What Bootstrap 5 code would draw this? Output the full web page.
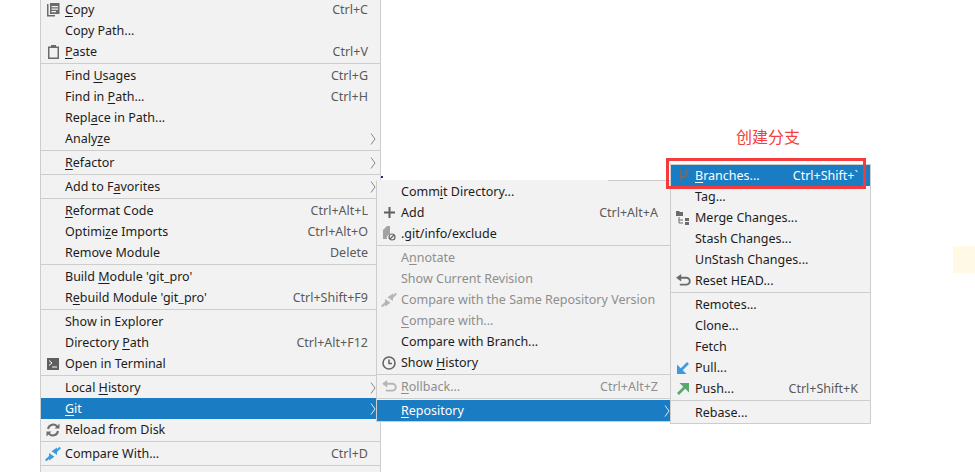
<!DOCTYPE html>
<html lang="en">
<head>
<meta charset="utf-8">
<title>Git menu</title>
<link href="https://cdn.jsdelivr.net/npm/bootstrap@5.3.0/dist/css/bootstrap.min.css" rel="stylesheet">
<style>
html,body{height:100%;margin:0;background:#fff;overflow:hidden}
body{font-family:"Noto Sans","Liberation Sans",sans-serif;font-size:12.5px;position:relative}
.ide-menu.dropdown-menu{display:block;position:absolute;margin:0;padding:0;background:#f2f2f2;border:1px solid #cdcdcd;border-radius:0;min-width:0;font-size:12.5px;color:#1c1c1c}
.menu-main{left:40px;top:-2px;width:341px;z-index:1}
.menu-repo{left:376px;top:180px;width:295px;z-index:2;border-top-color:transparent!important}
.menu-branch{left:670px;top:164px;width:201px;z-index:3}
.menu-repo::before{content:"";position:absolute;left:231px;right:0;top:-1px;height:1px;background:#cdcdcd}
.ide-menu .dropdown-item{display:flex;align-items:center;height:21px;line-height:21px;padding:0;color:#1c1c1c;white-space:nowrap;background:transparent}
.ide-menu .dropdown-item.is-active{background:#1a7cc3;color:#fff}
.ide-menu .dropdown-item.is-off{color:#8e8e8e}
.ide-menu .dropdown-divider{margin:1px 0;border-top:1px solid #cdcdcd;opacity:1}
.ico-slot{flex:0 0 24px;width:24px;height:21px;display:flex;align-items:center;justify-content:center}
.ico-slot svg{display:block}
.ico-blue{color:#3d9bdc}
.ico-pale{color:#b5b5b5}
.ico-grey{color:#6b6b6b}
.lbl{flex:1 1 auto}
.lbl u{text-underline-offset:2px;text-decoration-thickness:1px}
.keys{color:#5a5a5a}
.is-active .keys{color:#fff}
.is-off .keys{color:#8e8e8e}
.tail{flex:0 0 12px;width:12px;display:flex;align-items:center;padding-left:2px;color:#8a8a8a}
.is-active .tail{color:#dbe9f5}
.menu-repo .tail{justify-content:flex-end;padding-left:0}
.red-note{position:absolute;left:736px;top:124px;font:16px/24px "Noto Sans CJK SC",sans-serif;color:#f44040;z-index:4}
.red-frame{position:absolute;left:666px;top:158px;width:200px;height:31px;border:3px solid #f43a3a;z-index:5}
.pale-patch{position:absolute;left:953px;top:246px;width:22px;height:27px;background:#fff9e6}
.tiny-dot{position:absolute;left:381px;top:176px;width:2px;height:2px;background:#1a2a80}
</style>
</head>
<body>
<svg width="0" height="0" class="d-block position-absolute">
  <symbol id="chev" viewBox="0 0 6 12"><path d="M1 .5l4 5.500-4 5.500" fill="none" stroke="currentColor" stroke-width="1"/></symbol>
  <symbol id="cmp" viewBox="0 0 16 16"><path d="M.7 14.500L5 10.500" stroke="currentColor" stroke-width="2.200"/><path d="M4 7l5.500 3.700L4 14.500zM15.300 2.500L11 5.500" /><path d="M15.300 1.500L11 5.500" stroke="currentColor" stroke-width="2.200"/><path d="M12 9L6.500 5.300 12 1.500z"/></symbol>
  <symbol id="undo" viewBox="0 0 16 14"><path d="M5.500 0v8L0 4z" fill="currentColor"/><path d="M4 4h7a3.700 3.700 0 0 1 0 7.500H4" fill="none" stroke="currentColor" stroke-width="2"/></symbol>
</svg>

<div class="pale-patch"></div>
<div class="tiny-dot"></div>
<div class="red-note">创建分支</div>
<div class="red-frame"></div>

<div class="dropdown-menu ide-menu menu-main">
  <a class="dropdown-item"><span class="ico-slot"><svg width="14" height="14" viewBox="0 0 14 14"><path fill="#6b6b6b" d="M1 1h1.500v11H9v1.500H1zM4 0h9.500v11H4zM5.500 3v1.200h6.500V3zm0 2.500v1.200h6.500V5.500zm0 2.500v1.200h4.500V8z" fill-rule="evenodd"/></svg></span><span class="lbl"><u>C</u>opy</span><span class="keys">Ctrl+C</span><span class="tail"></span></a>
  <a class="dropdown-item"><span class="ico-slot"></span><span class="lbl">Copy Path...</span><span class="tail"></span></a>
  <a class="dropdown-item"><span class="ico-slot"><svg width="11" height="14" viewBox="0 0 11 14"><path fill="#6b6b6b" fill-rule="evenodd" d="M0 1.500h3V0h5v1.500h3V14H0zM1.500 3v9.500h8V3z"/></svg></span><span class="lbl"><u>P</u>aste</span><span class="keys">Ctrl+V</span><span class="tail"></span></a>
  <hr class="dropdown-divider">
  <a class="dropdown-item"><span class="ico-slot"></span><span class="lbl">Find <u>U</u>sages</span><span class="keys">Ctrl+G</span><span class="tail"></span></a>
  <a class="dropdown-item"><span class="ico-slot"></span><span class="lbl">Find in <u>P</u>ath...</span><span class="keys">Ctrl+H</span><span class="tail"></span></a>
  <a class="dropdown-item"><span class="ico-slot"></span><span class="lbl">Repl<u>a</u>ce in Path...</span><span class="tail"></span></a>
  <a class="dropdown-item"><span class="ico-slot"></span><span class="lbl">Analy<u>z</u>e</span><span class="tail"><svg width="6" height="12"><use href="#chev"/></svg></span></a>
  <hr class="dropdown-divider">
  <a class="dropdown-item"><span class="ico-slot"></span><span class="lbl"><u>R</u>efactor</span><span class="tail"><svg width="6" height="12"><use href="#chev"/></svg></span></a>
  <hr class="dropdown-divider">
  <a class="dropdown-item"><span class="ico-slot"></span><span class="lbl">Add to F<u>a</u>vorites</span><span class="tail"><svg width="6" height="12"><use href="#chev"/></svg></span></a>
  <hr class="dropdown-divider">
  <a class="dropdown-item"><span class="ico-slot"></span><span class="lbl"><u>R</u>eformat Code</span><span class="keys">Ctrl+Alt+L</span><span class="tail"></span></a>
  <a class="dropdown-item"><span class="ico-slot"></span><span class="lbl">Optimi<u>z</u>e Imports</span><span class="keys">Ctrl+Alt+O</span><span class="tail"></span></a>
  <a class="dropdown-item"><span class="ico-slot"></span><span class="lbl">Remove Module</span><span class="keys">Delete</span><span class="tail"></span></a>
  <hr class="dropdown-divider">
  <a class="dropdown-item"><span class="ico-slot"></span><span class="lbl">Build <u>M</u>odule 'git_pro'</span><span class="tail"></span></a>
  <a class="dropdown-item"><span class="ico-slot"></span><span class="lbl">R<u>e</u>build Module 'git_pro'</span><span class="keys">Ctrl+Shift+F9</span><span class="tail"></span></a>
  <hr class="dropdown-divider">
  <a class="dropdown-item"><span class="ico-slot"></span><span class="lbl">Show in Explorer</span><span class="tail"></span></a>
  <a class="dropdown-item"><span class="ico-slot"></span><span class="lbl">Directory <u>P</u>ath</span><span class="keys">Ctrl+Alt+F12</span><span class="tail"></span></a>
  <a class="dropdown-item"><span class="ico-slot"><svg width="12" height="12" viewBox="0 0 12 12"><rect width="12" height="12" fill="#5f5f5f"/><path d="M2 2.500L5 5 2 7.500" fill="none" stroke="#fff" stroke-width="1"/><path d="M5 9h5" stroke="#fff" stroke-width="1"/></svg></span><span class="lbl">Open in Terminal</span><span class="tail"></span></a>
  <hr class="dropdown-divider">
  <a class="dropdown-item"><span class="ico-slot"></span><span class="lbl">Local <u>H</u>istory</span><span class="tail"><svg width="6" height="12"><use href="#chev"/></svg></span></a>
  <a class="dropdown-item is-active"><span class="ico-slot"></span><span class="lbl"><u>G</u>it</span><span class="tail"><svg width="6" height="12"><use href="#chev"/></svg></span></a>
  <a class="dropdown-item"><span class="ico-slot"><svg width="14" height="14" viewBox="0 0 14 14" fill="none" stroke="#6e6e6e" stroke-width="2"><path d="M2 6A5.200 5.200 0 0 1 11.500 4"/><path d="M12 8A5.200 5.200 0 0 1 2.500 10"/><path fill="#6e6e6e" stroke="none" d="M13.500 .5v5h-5zM.5 13.500v-5h5z"/></svg></span><span class="lbl">Reload from Disk</span><span class="tail"></span></a>
  <hr class="dropdown-divider">
  <a class="dropdown-item"><span class="ico-slot ico-blue"><svg width="16" height="16" fill="currentColor"><use href="#cmp"/></svg></span><span class="lbl">Compare With...</span><span class="keys">Ctrl+D</span><span class="tail"></span></a>
  <hr class="dropdown-divider">
  <a class="dropdown-item"><span class="ico-slot"></span><span class="lbl"></span></a>
</div>

<div class="dropdown-menu ide-menu menu-repo">
  <a class="dropdown-item"><span class="ico-slot"></span><span class="lbl">Comm<u>i</u>t Directory...</span><span class="tail"></span></a>
  <a class="dropdown-item"><span class="ico-slot"><svg width="11" height="11" viewBox="0 0 11 11"><path d="M4.500 0h2v4.500H11v2H6.500V11h-2V6.500H0v-2h4.500z" fill="#5f5f5f"/></svg></span><span class="lbl">Add</span><span class="keys">Ctrl+Alt+A</span><span class="tail"></span></a>
  <a class="dropdown-item"><span class="ico-slot"><svg width="13" height="15" viewBox="0 0 13 15"><path d="M0 4l4-4h3v8.200A4 4 0 0 0 4 13H0z" fill="#a3a3a3"/><circle cx="9" cy="11" r="3" fill="none" stroke="#666" stroke-width="1.200"/><path d="M7 13l4-4" stroke="#666" stroke-width="1.200"/></svg></span><span class="lbl">.git/info/exclude</span><span class="tail"></span></a>
  <hr class="dropdown-divider">
  <a class="dropdown-item is-off"><span class="ico-slot"></span><span class="lbl">A<u>n</u>notate</span><span class="tail"></span></a>
  <a class="dropdown-item is-off"><span class="ico-slot"></span><span class="lbl">Show Current Revision</span><span class="tail"></span></a>
  <a class="dropdown-item is-off"><span class="ico-slot ico-pale"><svg width="16" height="16" fill="currentColor"><use href="#cmp"/></svg></span><span class="lbl">Compare with the Same Repository Version</span><span class="tail"></span></a>
  <a class="dropdown-item is-off"><span class="ico-slot"></span><span class="lbl"><u>C</u>ompare with...</span><span class="tail"></span></a>
  <a class="dropdown-item"><span class="ico-slot"></span><span class="lbl">Compare with Branch...</span><span class="tail"></span></a>
  <a class="dropdown-item"><span class="ico-slot"><svg width="14" height="14" viewBox="0 0 14 14" fill="none" stroke="#666" stroke-width="1.600"><circle cx="7" cy="7" r="6"/><path d="M7 3.500V7.500h3"/></svg></span><span class="lbl">Show <u>H</u>istory</span><span class="tail"></span></a>
  <hr class="dropdown-divider">
  <a class="dropdown-item is-off"><span class="ico-slot ico-pale"><svg width="15" height="13"><use href="#undo"/></svg></span><span class="lbl"><u>R</u>ollback...</span><span class="keys">Ctrl+Alt+Z</span><span class="tail"></span></a>
  <hr class="dropdown-divider">
  <a class="dropdown-item is-active"><span class="ico-slot"></span><span class="lbl"><u>R</u>epository</span><span class="tail"><svg width="6" height="12"><use href="#chev"/></svg></span></a>
</div>

<div class="dropdown-menu ide-menu menu-branch">
  <a class="dropdown-item is-active"><span class="ico-slot"><svg width="11" height="14" viewBox="0 0 11 14" fill="none" stroke="#6c6c6c" stroke-width="2"><path d="M2.500 1v12M8.500 3v2.500a2.500 2.500 0 0 1-2.500 2.500H2.500"/><circle cx="8.500" cy="2.500" r="1.200" fill="#6c6c6c"/></svg></span><span class="lbl"><u>B</u>ranches...</span><span class="keys">Ctrl+Shift+`</span><span class="tail"></span></a>
  <a class="dropdown-item"><span class="ico-slot"></span><span class="lbl">Tag...</span><span class="tail"></span></a>
  <a class="dropdown-item"><span class="ico-slot"><svg width="14" height="14" viewBox="0 0 14 14"><path d="M0 0h3l1 1h3v4H0z" fill="#6b6b6b"/><path d="M3 6v6h4M3 9h4" fill="none" stroke="#6b6b6b"/><rect x="9" y="7" width="4" height="3" fill="#6b6b6b"/><rect x="9" y="11" width="4" height="3" fill="#6b6b6b"/></svg></span><span class="lbl">Merge Changes...</span><span class="tail"></span></a>
  <a class="dropdown-item"><span class="ico-slot"></span><span class="lbl">Stash Changes...</span><span class="tail"></span></a>
  <a class="dropdown-item"><span class="ico-slot"></span><span class="lbl">UnStash Changes...</span><span class="tail"></span></a>
  <a class="dropdown-item"><span class="ico-slot ico-grey"><svg width="15" height="13"><use href="#undo"/></svg></span><span class="lbl">Reset HEAD...</span><span class="tail"></span></a>
  <hr class="dropdown-divider">
  <a class="dropdown-item"><span class="ico-slot"></span><span class="lbl">Remotes...</span><span class="tail"></span></a>
  <a class="dropdown-item"><span class="ico-slot"></span><span class="lbl">Clone...</span><span class="tail"></span></a>
  <a class="dropdown-item"><span class="ico-slot"></span><span class="lbl">Fetch</span><span class="tail"></span></a>
  <a class="dropdown-item"><span class="ico-slot"><svg width="12" height="12" viewBox="0 0 12 12"><path d="M0 2.500L9.500 12H0z" fill="#3d9bdc"/><path d="M3 9l8-8" stroke="#3d9bdc" stroke-width="2.600"/></svg></span><span class="lbl">Pull...</span><span class="tail"></span></a>
  <a class="dropdown-item"><span class="ico-slot"><svg width="12" height="12" viewBox="0 0 12 12"><path d="M12 9.500L2.500 0H12z" fill="#5aa66c"/><path d="M9 3l-8 8" stroke="#5aa66c" stroke-width="2.600"/></svg></span><span class="lbl">Push...</span><span class="keys">Ctrl+Shift+K</span><span class="tail"></span></a>
  <hr class="dropdown-divider">
  <a class="dropdown-item"><span class="ico-slot"></span><span class="lbl">Rebase...</span><span class="tail"></span></a>
</div>
<script src="https://cdn.jsdelivr.net/npm/bootstrap@5.3.0/dist/js/bootstrap.bundle.min.js"></script>
</body>
</html>
